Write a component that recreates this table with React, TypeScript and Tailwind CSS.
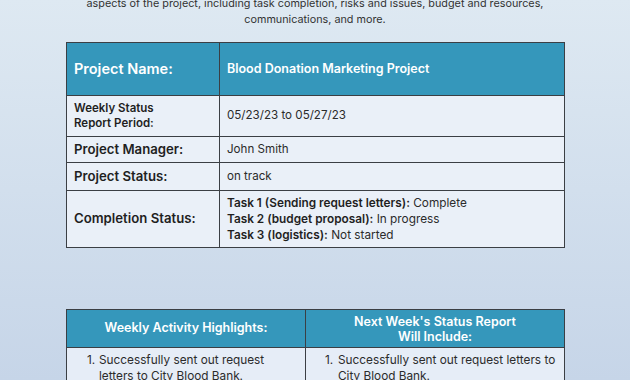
import React from 'react';

const rows = [
  { label: 'Project Manager:', value: 'John Smith' },
  { label: 'Project Status:', value: 'on track' },
];

export default function App() {
  return (
    <div
      className="h-[380px] w-[630px] overflow-hidden bg-gradient-to-b from-[#dee9f2] to-[#c6d5e8] text-[#1f1f1f]"
      style={{ fontFamily: 'Inter, "Noto Sans", sans-serif' }}
    >
      {/* intro text, cut off at top */}
      <p className="mt-[-4px] px-[70px] text-center text-[10.8px] leading-[16px] text-[#333]">
        aspects of the project, including task completion, risks and issues, budget and resources,
        <br />
        communications, and more.
      </p>

      {/* project summary table */}
      <div className="ml-[66px] mt-[14px] grid w-[499px] grid-cols-[152px_344px] grid-rows-[52px_40px_25px_27px_56px] gap-px bg-[#3b3f44] p-px">
        <div className="flex items-center bg-[#3597bb] pl-[7px] text-[14.5px] font-semibold text-white">
          Project Name:
        </div>
        <div className="flex items-center bg-[#3597bb] pl-[7px] text-[12.5px] font-semibold text-white">
          Blood Donation Marketing Project
        </div>

        <div className="flex items-center bg-[#eaf0f8] pl-[7px] text-[11.5px] font-semibold leading-[15px]">
          Weekly Status
          <br />
          Report Period:
        </div>
        <div className="flex items-center bg-[#eaf0f8] pl-[7px] text-[11.6px] text-[#2b2b2b]">05/23/23 to 05/27/23</div>

        {rows.map((r) => (
          <React.Fragment key={r.label}>
            <div className="flex items-center bg-[#eaf0f8] pl-[7px] text-[13.2px] font-semibold">{r.label}</div>
            <div className="flex items-center bg-[#eaf0f8] pl-[7px] text-[11.6px] text-[#2b2b2b]">{r.value}</div>
          </React.Fragment>
        ))}

        <div className="flex items-center bg-[#eaf0f8] pl-[7px] text-[13.2px] font-semibold">Completion Status:</div>
        <div className="flex flex-col justify-center bg-[#eaf0f8] pl-[7px] text-[11.8px] leading-[16px] text-[#2b2b2b]">
          <div>
            <span className="font-semibold text-[#1f1f1f]">Task 1 (Sending request letters):</span> Complete
          </div>
          <div>
            <span className="font-semibold text-[#1f1f1f]">Task 2 (budget proposal):</span> In progress
          </div>
          <div>
            <span className="font-semibold text-[#1f1f1f]">Task 3 (logistics):</span> Not started
          </div>
        </div>
      </div>

      {/* weekly highlights table */}
      <div className="ml-[66px] mt-[61px] grid w-[499px] grid-cols-[238px_258px] grid-rows-[37px_60px] gap-px bg-[#3b3f44] p-px">
        <div className="flex items-center justify-center bg-[#3597bb] text-[12.5px] font-semibold text-white">
          Weekly Activity Highlights:
        </div>
        <div className="flex items-center justify-center bg-[#3597bb] text-center text-[12.5px] font-semibold leading-[15px] text-white">
          Next Week's Status Report
          <br />
          Will Include:
        </div>

        <div className="bg-[#e6edf7] pl-[20px] pt-[4px] text-[11.8px] leading-[16px] text-[#2b2b2b]">
          <div className="flex whitespace-nowrap">
            <span className="w-[12px] shrink-0">1.</span>
            <span>
              Successfully sent out request
              <br />
              letters to City Blood Bank.
            </span>
          </div>
        </div>
        <div className="bg-[#e6edf7] pl-[19px] pt-[4px] text-[11.8px] leading-[16px] text-[#2b2b2b]">
          <div className="flex whitespace-nowrap">
            <span className="w-[13px] shrink-0">1.</span>
            <span>
              Successfully sent out request letters to
              <br />
              City Blood Bank.
            </span>
          </div>
        </div>
      </div>
    </div>
  );
}
